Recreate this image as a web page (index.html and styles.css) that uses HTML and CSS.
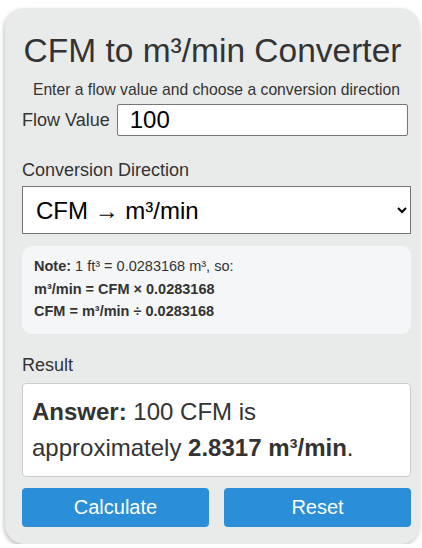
FILE: index.html
```html
<!DOCTYPE html>
<html lang="en">

<head>
  <meta charset="UTF-8">
  <meta name="viewport" content="width=device-width, initial-scale=1.0">
  <title>CFM to m³/min Converter</title>
  <link rel="stylesheet" href="styles.css">
</head>

<body>
  <div class="card">
    <h1>CFM to m³/min Converter</h1>
    <p class="intro">Enter a flow value and choose a conversion direction</p>
    <div class="row">
      <label for="flow">Flow Value</label>
      <input id="flow" type="text" value="100">
    </div>
    <label class="block" for="direction">Conversion Direction</label>
    <select id="direction">
      <option value="0">CFM → m³/min</option>
      <option value="1">m³/min → CFM</option>
    </select>
    <div class="note">
      <b>Note:</b> 1 ft³ = 0.0283168 m³, so:<br>
      <b>m³/min = CFM × 0.0283168</b><br>
      <b>CFM = m³/min ÷ 0.0283168</b>
    </div>
    <label class="block result-label">Result</label>
    <div class="result" id="result"><b>Answer:</b> 100 CFM is approximately <b>2.8317 m³/min</b>.</div>
    <div class="buttons">
      <button class="btn">Calculate</button>
      <button class="btn">Reset</button>
    </div>
  </div>
</body>

</html>
```

FILE: styles.css
```css
html,
body {
  margin: 0;
  font-family: "Liberation Sans", Arial, sans-serif;
  background: white;
  color: #333;
}

.card {
  margin: 8px 0 0 5px;
  width: 415px;
  height: 536px;
  box-sizing: border-box;
  padding: 23px 9px 0 17px;
  background: #e9ebeb;
  border-radius: 20px;
  box-shadow: -1px 2px 4px rgba(0, 0, 0, 0.25);
}

h1 {
  margin: 0 8px 0 0;
  font-size: 33.5px;
  font-weight: normal;
  text-align: center;
  line-height: 40px;
}

.intro {
  margin: 10px 0 0;
  font-size: 15.7px;
  text-align: center;
  line-height: 18px;
}

.row {
  display: flex;
  align-items: center;
  margin-top: 5px;
}

label {
  font-size: 18px;
  white-space: nowrap;
}

.row label {
  margin-right: 7px;
}

input {
  flex: 1;
  min-width: 0;
  height: 32px;
  box-sizing: border-box;
  border: 1px solid #767676;
  border-radius: 2px;
  padding: 0 12px;
  font-family: inherit;
  font-size: 24px;
  color: black;
  margin-right: 3px;
}

.block {
  display: block;
  margin-top: 24px;
  line-height: 20px;
}

select {
  display: block;
  width: 100%;
  height: 48px;
  margin-top: 6px;
  border: 1px solid #767676;
  border-radius: 0;
  background: white;
  padding: 0 9px;
  font-family: inherit;
  font-size: 24px;
  color: black;
}

.note {
  margin-top: 12px;
  padding: 9px 12px 11px;
  background: #f5f6f8;
  border-radius: 10px;
  font-size: 14.5px;
  line-height: 22.5px;
}

.result-label {
  margin-top: 21px;
}

.result {
  margin-top: 8px;
  padding: 10px 9px;
  background: white;
  border: 1px solid #ccc;
  border-radius: 4px;
  font-size: 24px;
  line-height: 36px;
}

.buttons {
  display: flex;
  gap: 15px;
  margin-top: 11px;
}

.btn {
  flex: 1;
  height: 39px;
  border: none;
  border-radius: 4px;
  background: #2a8fd8;
  color: white;
  font-family: inherit;
  font-size: 20px;
}
```
